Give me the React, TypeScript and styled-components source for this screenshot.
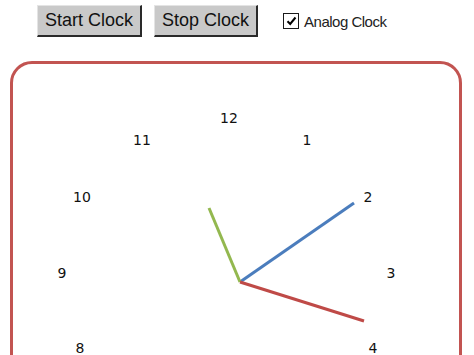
import React from 'react';
import styled, { createGlobalStyle } from 'styled-components';

const GlobalStyle = createGlobalStyle`
  html, body {
    margin: 0;
    padding: 0;
    background: #ffffff;
    overflow: hidden;
  }
`;

// only the numerals that fall inside the visible part of the frame
const numbers = [
  { label: '12', x: 229, y: 118 },
  { label: '1', x: 307, y: 140 },
  { label: '2', x: 368, y: 197 },
  { label: '3', x: 391, y: 273 },
  { label: '4', x: 373, y: 348 },
  { label: '8', x: 80, y: 348 },
  { label: '9', x: 62, y: 273 },
  { label: '10', x: 82, y: 197 },
  { label: '11', x: 142, y: 140 },
];

const hands = [
  { color: '#4b7dbd', x: 354, y: 203 },
  { color: '#93b84f', x: 209, y: 208 },
  { color: '#bf4a47', x: 364, y: 321 },
];

const center = { x: 240, y: 282 };

const App = () => {
  return (
    <Page>
      <GlobalStyle />
      <Toolbar>
        <Button>Start Clock</Button>
        <Button>Stop Clock</Button>
        <CheckLabel>
          <CheckBox>
            <svg width="11" height="10" viewBox="0 0 11 10">
              <path d="M1.5 5.2 L4.2 8 L9.5 1.5" fill="none" stroke="#000" strokeWidth="2" />
            </svg>
          </CheckBox>
          Analog Clock
        </CheckLabel>
      </Toolbar>
      <Frame>
        <ClockFace viewBox="13 64 446 324" width="446" height="324">
          {numbers.map((n) => (
            <text
              key={n.label}
              x={n.x}
              y={n.y}
              textAnchor="middle"
              dominantBaseline="central"
            >
              {n.label}
            </text>
          ))}
          {hands.map((h) => (
            <line
              key={h.color}
              x1={center.x}
              y1={center.y}
              x2={h.x}
              y2={h.y}
              stroke={h.color}
              strokeWidth="3"
            />
          ))}
        </ClockFace>
      </Frame>
    </Page>
  );
};

const Page = styled.div`
  width: 474px;
  height: 355px;
  overflow: hidden;
`;

const Toolbar = styled.div`
  display: flex;
  align-items: center;
  padding: 5px 0 0 37px;
  height: 32px;
`;

const Button = styled.button`
  height: 32px;
  margin-right: 12px;
  padding: 0 7px;
  font-family: 'Liberation Sans', Arial, sans-serif;
  font-size: 18px;
  color: #111;
  background: #c9c9c9;
  border-top: 1px solid #e4e4e4;
  border-left: 1px solid #e4e4e4;
  border-right: 2px solid #2a2a2a;
  border-bottom: 2px solid #2a2a2a;
  border-radius: 0;
`;

const CheckLabel = styled.label`
  display: flex;
  align-items: center;
  margin-left: 13px;
  font-family: 'Liberation Sans', Arial, sans-serif;
  font-size: 15px;
  letter-spacing: -0.5px;
  color: #222;
`;

const CheckBox = styled.span`
  display: flex;
  align-items: center;
  justify-content: center;
  width: 14px;
  height: 14px;
  margin-right: 5px;
  border: 1px solid #1a1a1a;
  background: #fff;
`;

const Frame = styled.div`
  margin: 24px 0 0 10px;
  width: 452px;
  height: 330px;
  box-sizing: border-box;
  border: 3px solid #c25451;
  border-radius: 22px;
`;

const ClockFace = styled.svg`
  display: block;
  font-family: 'DejaVu Sans', Verdana, sans-serif;
  font-size: 14px;
  fill: #111;
`;

export default App;
